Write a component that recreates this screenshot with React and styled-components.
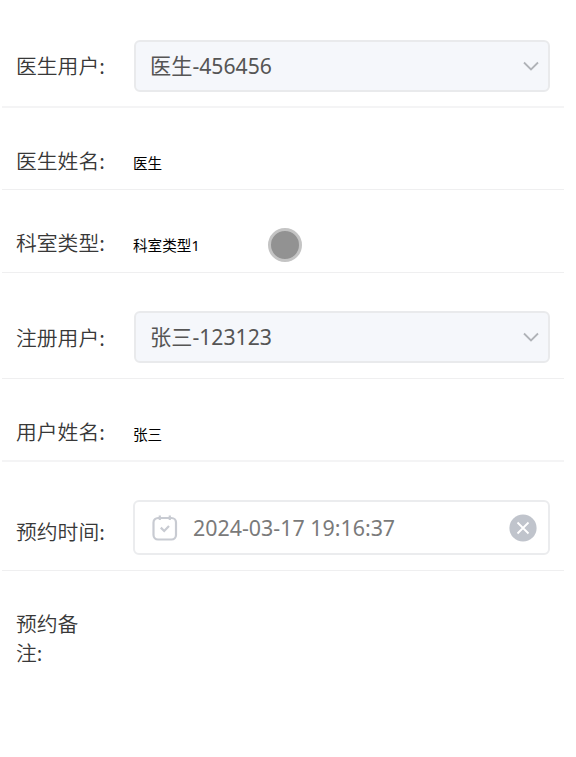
import React from 'react'
import styled, { createGlobalStyle } from 'styled-components'

const App = () => {
  return (
    <>
      <GlobalStyle />
      <Form>
        <Row $height={108} $top={40} $line={2}>
          <Label $shift={11}>医生用户:</Label>
          <Select>
            <span>医生-456456</span>
            <Arrow />
          </Select>
        </Row>
        <Row $height={82} $top={39}>
          <Label>医生姓名:</Label>
          <Value>医生</Value>
        </Row>
        <Row $height={83} $top={39}>
          <Label>科室类型:</Label>
          <Value>科室类型1</Value>
          <Pointer />
        </Row>
        <Row $height={106} $top={38}>
          <Label $shift={12}>注册用户:</Label>
          <Select>
            <span>张三-123123</span>
            <Arrow />
          </Select>
        </Row>
        <Row $height={83} $top={39} $line={2}>
          <Label>用户姓名:</Label>
          <Value>张三</Value>
        </Row>
        <Row $height={109} $top={38}>
          <Label $shift={17}>预约时间:</Label>
          <DateInput>
            <Calendar />
            <time>2024-03-17 19:16:37</time>
            <Clear />
          </DateInput>
        </Row>
        <Row $height={120} $top={39} $line={0}>
          <Label $narrow>预约备注:</Label>
        </Row>
      </Form>
    </>
  )
}

const Arrow = () => (
  <ArrowSvg viewBox="0 0 16 10">
    <path d="M1 1.5 L8 8.5 L15 1.5" />
  </ArrowSvg>
)

const Calendar = () => (
  <CalendarSvg viewBox="0 0 26 26">
    <rect x="1.5" y="3" width="22.5" height="21.5" rx="4.5" />
    <path d="M7.8 0.5 V5 M17.8 0.5 V5" />
    <path d="M8.8 12.6 L12.2 16 L17 11" />
  </CalendarSvg>
)

const Clear = () => (
  <ClearSvg viewBox="0 0 28 28">
    <circle cx="14" cy="14" r="13.6" />
    <path d="M8.5 8.5 L19.5 19.5 M19.5 8.5 L8.5 19.5" />
  </ClearSvg>
)

const GlobalStyle = createGlobalStyle`
  body {
    margin: 0;
    background-color: #fff;
    font-family: 'Noto Sans', 'Noto Sans CJK SC', sans-serif;
  }
`

const Form = styled.div`
  width: 562px;
  margin-left: 2px;
`

const Row = styled.div`
  display: flex;
  align-items: flex-start;
  height: ${p => p.$height}px;
  padding-top: ${p => p.$top}px;
  padding-left: 14px;
  box-sizing: border-box;
  border-bottom: ${p => p.$line ?? 1}px solid ${p => (p.$line ? '#f4f4f5' : '#efeff0')};
`

const Label = styled.label`
  flex: none;
  width: ${p => (p.$narrow ? 72 : 118)}px;
  margin-top: ${p => p.$shift || -1}px;
  color: #383838;
  font-family: 'Noto Sans CJK SC', sans-serif;
  font-weight: 350;
  font-size: 20.8px;
  line-height: 28.5px;
`

const Select = styled.div`
  display: flex;
  align-items: center;
  justify-content: space-between;
  width: 416px;
  height: 52px;
  padding: 0 9px 0 14px;
  box-sizing: border-box;
  border: 2px solid #e9eaec;
  border-radius: 6px;
  background-color: #f5f7fb;
  color: #555;
  font-size: 21.2px;
  line-height: 30px;
`

const ArrowSvg = styled.svg`
  width: 16px;
  height: 10px;
  fill: none;
  stroke: #b0b3b8;
  stroke-width: 1.8;
`

const Value = styled.span`
  margin-left: -1px;
  color: #000;
  font-size: 14.6px;
  line-height: 32px;
`

/* touch marker */
const Pointer = styled.i`
  width: 34px;
  height: 34px;
  margin-top: -1px;
  margin-left: 68px;
  box-sizing: border-box;
  border: 3px solid #c4c4c4;
  border-radius: 50%;
  background-color: #929292;
`

const DateInput = styled.div`
  display: flex;
  align-items: center;
  width: 417px;
  height: 55px;
  margin-left: -1px;
  padding: 0 11px 0 17px;
  box-sizing: border-box;
  border: 2px solid #ebecee;
  border-radius: 6px;
  color: #7a7a7a;
  font-size: 21.4px;
  line-height: 30px;

  time {
    flex: 1;
    margin-left: 15px;
  }
`

const CalendarSvg = styled.svg`
  width: 26px;
  height: 26px;
  fill: none;
  stroke: #c8cbd2;
  stroke-width: 2.2;
`

const ClearSvg = styled.svg`
  width: 28px;
  height: 28px;
  fill: #c0c4cc;

  path {
    stroke: #fff;
    stroke-width: 1.8;
  }
`

export default App
